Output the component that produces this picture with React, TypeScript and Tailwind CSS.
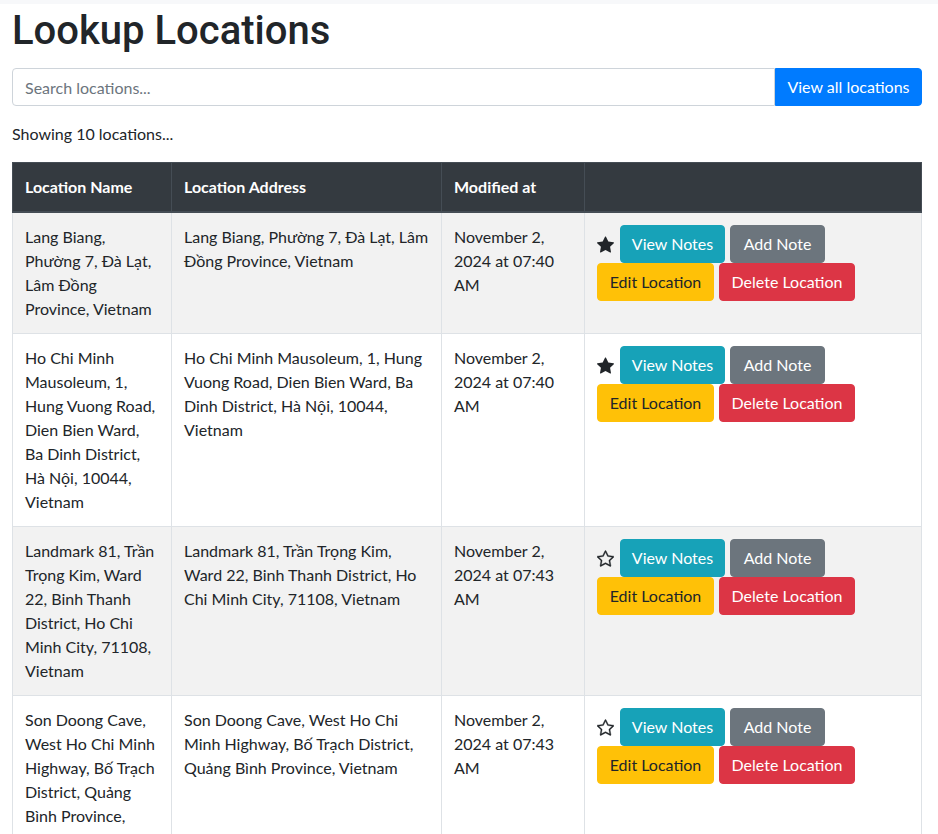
type Row = {
  name: string[];
  address: string[];
  modified: string[];
  fav: boolean;
  striped: boolean;
};

const rows: Row[] = [
  {
    name: ["Lang Biang,", "Phường 7, Đà Lạt,", "Lâm Đồng", "Province, Vietnam"],
    address: ["Lang Biang, Phường 7, Đà Lạt, Lâm", "Đồng Province, Vietnam"],
    modified: ["November 2,", "2024 at 07:40", "AM"],
    fav: true,
    striped: true,
  },
  {
    name: [
      "Ho Chi Minh",
      "Mausoleum, 1,",
      "Hung Vuong Road,",
      "Dien Bien Ward,",
      "Ba Dinh District,",
      "Hà Nội, 10044,",
      "Vietnam",
    ],
    address: [
      "Ho Chi Minh Mausoleum, 1, Hung",
      "Vuong Road, Dien Bien Ward, Ba",
      "Dinh District, Hà Nội, 10044,",
      "Vietnam",
    ],
    modified: ["November 2,", "2024 at 07:40", "AM"],
    fav: true,
    striped: false,
  },
  {
    name: [
      "Landmark 81, Trần",
      "Trọng Kim, Ward",
      "22, Binh Thanh",
      "District, Ho Chi",
      "Minh City, 71108,",
      "Vietnam",
    ],
    address: [
      "Landmark 81, Trần Trọng Kim,",
      "Ward 22, Binh Thanh District, Ho",
      "Chi Minh City, 71108, Vietnam",
    ],
    modified: ["November 2,", "2024 at 07:43", "AM"],
    fav: false,
    striped: true,
  },
  {
    name: [
      "Son Doong Cave,",
      "West Ho Chi Minh",
      "Highway, Bố Trạch",
      "District, Quảng",
      "Bình Province,",
      "Vietnam",
    ],
    address: [
      "Son Doong Cave, West Ho Chi",
      "Minh Highway, Bố Trạch District,",
      "Quảng Bình Province, Vietnam",
    ],
    modified: ["November 2,", "2024 at 07:43", "AM"],
    fav: false,
    striped: false,
  },
];

function StarFill() {
  return (
    <svg width="17" height="17" viewBox="0 0 16 16" fill="#212529">
      <path d="M3.612 15.443c-.386.198-.824-.149-.746-.592l.83-4.73L.173 6.765c-.329-.314-.158-.888.283-.95l4.898-.696L7.538.792c.197-.39.73-.39.927 0l2.184 4.327 4.898.696c.441.062.612.636.282.95l-3.522 3.356.83 4.73c.078.443-.36.79-.746.592L8 13.187l-4.389 2.256z" />
    </svg>
  );
}

function StarOutline() {
  return (
    <svg width="17" height="17" viewBox="0 0 16 16" fill="#212529" stroke="#212529" strokeWidth="0.35">
      <path d="M2.866 14.85c-.078.444.36.791.746.593l4.39-2.256 4.389 2.256c.386.198.824-.149.746-.592l-.83-4.730 3.522-3.356c.33-.314.16-.888-.282-.95l-4.898-.696L8.465.792a.513.513 0 0 0-.927 0L5.354 5.12l-4.898.696c-.441.062-.612.636-.283.95l3.523 3.356-.83 4.73zm4.905-2.767-3.686 1.894.694-3.957a.56.56 0 0 0-.163-.505L1.71 6.745l4.052-.576a.53.53 0 0 0 .393-.288L8 2.223l1.847 3.658a.53.53 0 0 0 .393.288l4.052.575-2.906 2.77a.56.56 0 0 0-.163.506l.694 3.957-3.686-1.894a.5.5 0 0 0-.461 0z" />
    </svg>
  );
}

function Lines({ lines }: { lines: string[] }) {
  return (
    <>
      {lines.map((l, i) => (
        <span key={i} className="block whitespace-nowrap">
          {l}
        </span>
      ))}
    </>
  );
}

export default function App() {
  return (
    <div
      className="min-h-screen bg-white text-[16px] leading-6 text-[#212529]"
      style={{ fontFamily: "Lato, 'Noto Sans', sans-serif" }}
    >
      <div className="h-1 bg-[#f7f8fa]" />
      <div className="pl-3 pr-4">
        <h1
          className="text-[40px] leading-[48px] font-medium mt-[3px] mb-[13px]"
          style={{ fontFamily: "Roboto, Lato, sans-serif" }}
        >
          Lookup Locations
        </h1>
        <div className="flex h-[38px]">
          <input
            className="flex-1 min-w-0 h-[38px] border border-[#ced4da] rounded-l-[4px] px-3 text-[16px] text-[#495057] placeholder:text-[#6c757d] outline-none"
            placeholder="Search locations..."
          />
          <button className="w-[147px] h-[38px] bg-[#007bff] text-white rounded-r-[4px] border border-[#007bff] text-[16px]">
            View all locations
          </button>
        </div>
        <p className="mt-4 mb-4">Showing 10 locations...</p>
        <table className="w-full table-fixed border-collapse">
          <colgroup>
            <col className="w-[159px]" />
            <col className="w-[270px]" />
            <col className="w-[143px]" />
            <col />
          </colgroup>
          <thead>
            <tr className="bg-[#343a40] text-white">
              <th className="text-left font-bold p-3 border border-[#454d55] border-b-2">Location Name</th>
              <th className="text-left font-bold p-3 border border-[#454d55] border-b-2">Location Address</th>
              <th className="text-left font-bold p-3 border border-[#454d55] border-b-2">Modified at</th>
              <th className="text-left font-bold p-3 border border-[#454d55] border-b-2"></th>
            </tr>
          </thead>
          <tbody>
            {rows.map((r, i) => (
              <tr key={i} className={r.striped ? "bg-[#f2f2f2]" : "bg-white"}>
                <td className="p-3 align-top border border-[#dee2e6]">
                  <Lines lines={r.name} />
                </td>
                <td className="p-3 align-top border border-[#dee2e6]">
                  <Lines lines={r.address} />
                </td>
                <td className="p-3 align-top border border-[#dee2e6]">
                  <Lines lines={r.modified} />
                </td>
                <td className="p-3 align-top border border-[#dee2e6]">
                  <div className="flex flex-wrap items-center gap-x-[5px] w-[260px]">
                    <span className="mr-[1px] flex items-center">{r.fav ? <StarFill /> : <StarOutline />}</span>
                    <button className="w-[105px] h-[38px] rounded-[4px] bg-[#17a2b8] border border-[#17a2b8] text-white">
                      View Notes
                    </button>
                    <button className="w-[95px] h-[38px] rounded-[4px] bg-[#6c757d] border border-[#6c757d] text-white">
                      Add Note
                    </button>
                    <button className="w-[117px] h-[38px] rounded-[4px] bg-[#ffc107] border border-[#ffc107] text-[#212529]">
                      Edit Location
                    </button>
                    <button className="w-[136px] h-[38px] rounded-[4px] bg-[#dc3545] border border-[#dc3545] text-white">
                      Delete Location
                    </button>
                  </div>
                </td>
              </tr>
            ))}
          </tbody>
        </table>
      </div>
    </div>
  );
}
